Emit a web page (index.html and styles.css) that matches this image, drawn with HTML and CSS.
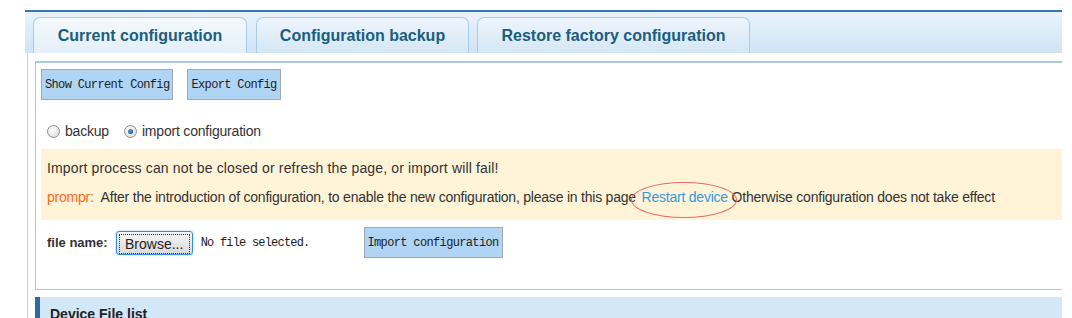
FILE: index.html
```html
<!DOCTYPE html>
<html lang="en">
<head>
    <meta charset="UTF-8">
    <title>Configuration management</title>
    <link rel="stylesheet" href="styles.css">
</head>
<body>

<div class="page">
    <div class="tabbar">
        <div class="tab active">Current configuration</div>
        <div class="tab tab-backup">Configuration backup</div>
        <div class="tab tab-restore">Restore factory configuration</div>
    </div>

    <div class="frame">
        <div class="panel">
            <div class="toolbar">
                <button class="cmd-btn">Show Current Config</button>
                <button class="cmd-btn">Export Config</button>
            </div>

            <div class="mode-row">
                <label class="mode"><span class="radio"></span>backup</label>
                <label class="mode"><span class="radio checked"></span>import configuration</label>
            </div>

            <div class="notice">
                <p class="warn-line">Import process can not be closed or refresh the page, or import will fail!</p>
                <p class="tip-line"><span class="prompt">prompr:</span> After the introduction of configuration, to enable the new configuration, please in this page <span class="circled"><a href="#" class="restart">Restart device</a></span> Otherwise configuration does not take effect</p>
            </div>

            <div class="file-row">
                <span class="file-label">file name:</span>
                <button class="browse"><span>Browse...</span></button>
                <span class="no-file">No file selected.</span>
                <button class="cmd-btn import-btn">Import configuration</button>
            </div>
        </div>

        <div class="section-head">Device File list</div>
    </div>
</div>

</body>
</html>
```

FILE: styles.css
```css
body {
    margin: 0;
    padding: 0;
    background-color: #ffffff;
    font-family: "Liberation Sans", Arial, sans-serif;
    font-size: 14px;
    color: #333;
}
.page {
    margin-left: 25px;
    padding-top: 10px;
    width: 1037px;
}
.tabbar {
    display: flex;
    align-items: flex-end;
    gap: 8px;
    height: 41px;
    padding-left: 8px;
    border-top: 2px solid #3a73b9;
    background: linear-gradient(#e9f3fc, #cfe3f4);
}
.tab {
    width: 211px;
    height: 35px;
    line-height: 36px;
    text-align: center;
    font-size: 16px;
    font-weight: bold;
    color: #1b5d7f;
    border: 1px solid #a7cbe9;
    border-bottom: none;
    border-radius: 7px 7px 0 0;
    background: linear-gradient(#eef5fc, #d3e6f5);
}
.tab.active {
    width: 212px;
    background: linear-gradient(#f4f9fd, #e3eff9);
}
.tab-backup {
    margin-left: 1px;
}
.tab-restore {
    width: 271px;
}
.frame {
    margin-left: 2px;
    padding: 8px 0 0 7px;
    border-left: 1px solid #cfcfcf;
}
.panel {
    height: 220px;
    padding: 6px 0 0 5px;
    border: 1px solid #a9c8e4;
    border-top: 2px solid #a9c8e4;
    border-right: none;
}
.toolbar {
    display: flex;
    gap: 14px;
}
.cmd-btn {
    height: 31px;
    padding: 0 3px;
    font-family: "Liberation Mono", "Courier New", monospace;
    font-size: 12px;
    letter-spacing: -0.65px;
    color: #222;
    background-color: #b0d4f4;
    border: 1px solid #a3a9ae;
    border-radius: 0;
}
.mode-row {
    display: flex;
    gap: 15px;
    margin-top: 22px;
    padding-left: 6px;
    height: 18px;
    align-items: center;
}
.mode {
    display: flex;
    align-items: center;
    gap: 5px;
    letter-spacing: -0.2px;
    color: #333;
}
.radio {
    width: 11px;
    height: 11px;
    border-radius: 50%;
    border: 1px solid #8e8e8e;
    background: radial-gradient(circle at 40% 35%, #ffffff, #d6d6d6);
    display: inline-flex;
    align-items: center;
    justify-content: center;
}
.radio.checked::after {
    content: "";
    width: 5px;
    height: 5px;
    border-radius: 50%;
    background: radial-gradient(circle at 40% 35%, #5f9fd6, #0c3f75);
}
.notice {
    margin-top: 9px;
    height: 71px;
    padding: 9px 6px 0;
    background-color: #fff4d8;
    box-sizing: border-box;
}
.notice p {
    margin: 0;
    height: 29px;
    line-height: 21px;
    white-space: nowrap;
}
.warn-line {
    letter-spacing: 0.15px;
}
.tip-line {
    letter-spacing: -0.22px;
}
.prompt {
    color: #ff6a13;
    margin-right: 4px;
}
.circled {
    position: relative;
    margin-left: 2px;
}
.circled::after {
    content: "";
    position: absolute;
    left: -11px;
    top: -7px;
    width: 104px;
    height: 34px;
    border: 1px solid #e46a6a;
    border-radius: 50%;
}
.restart {
    color: #3399e6;
    text-decoration: none;
}
.file-row {
    display: flex;
    align-items: center;
    margin-top: 6px;
    padding-left: 6px;
    height: 33px;
}
.file-label {
    font-size: 13px;
    font-weight: bold;
    color: #333;
    margin-right: 8px;
}
.browse {
    width: 77px;
    height: 24px;
    padding: 2px;
    font-family: "Liberation Sans", Arial, sans-serif;
    font-size: 14px;
    color: #222;
    border: 1px solid #3b8fd1;
    border-radius: 3px;
    background: linear-gradient(#f5f5f5, #dadada);
    box-shadow: 0 0 2px #7fbde9;
}
.browse span {
    display: block;
    height: 18px;
    line-height: 18px;
    border: 1px dotted #333;
}
.no-file {
    margin-left: 8px;
    font-family: "Liberation Mono", "Courier New", monospace;
    font-size: 12px;
    letter-spacing: -0.8px;
    color: #222;
}
.import-btn {
    margin-left: 54px;
}
.section-head {
    margin-top: 7px;
    height: 26px;
    padding: 4px 0 0 10px;
    line-height: 26px;
    font-size: 14px;
    font-weight: bold;
    color: #222;
    background-color: #d2e8f8;
    border-left: 5px solid #2d69a6;
}
```
